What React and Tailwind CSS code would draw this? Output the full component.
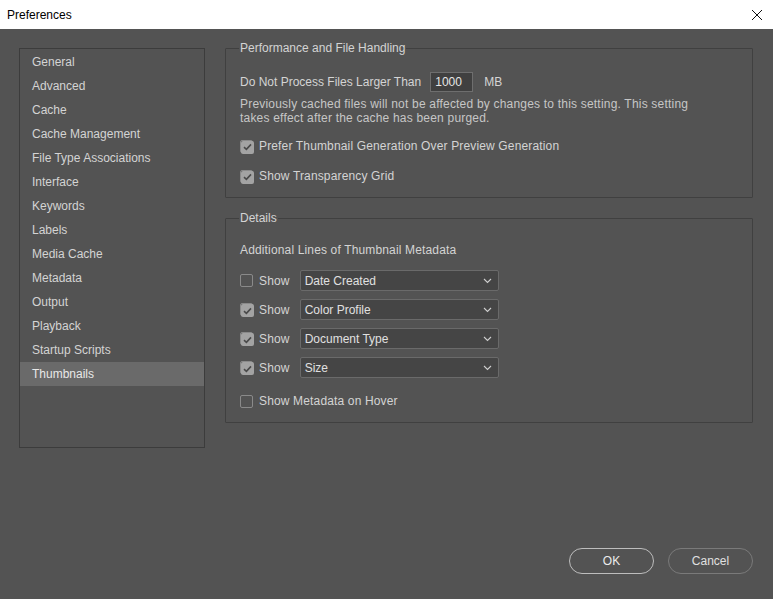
const navItems = [
  "General",
  "Advanced",
  "Cache",
  "Cache Management",
  "File Type Associations",
  "Interface",
  "Keywords",
  "Labels",
  "Media Cache",
  "Metadata",
  "Output",
  "Playback",
  "Startup Scripts",
  "Thumbnails",
];

const metaRows = [
  { checked: false, value: "Date Created" },
  { checked: true, value: "Color Profile" },
  { checked: true, value: "Document Type" },
  { checked: true, value: "Size" },
];

function Check({ checked }) {
  return (
    <span className="grid h-[13px] w-[13px] shrink-0 place-items-center rounded-[2px] border border-[#8a8a8a]">
      {checked ? (
        <span className="grid h-[13px] w-[13px] place-items-center rounded-[2px] bg-[#a3a3a3]">
          <svg width="9" height="8" viewBox="0 0 9 8" fill="none">
            <path d="M1 4.2 3.4 6.4 8 1.4" stroke="#4a4a4a" strokeWidth="1.6" />
          </svg>
        </span>
      ) : null}
    </span>
  );
}

function CheckRow({ checked, label, className = "" }) {
  return (
    <div className={`flex items-center gap-[6px] ${className}`}>
      <Check checked={checked} />
      <span className="tracking-[0.15px]">{label}</span>
    </div>
  );
}

function Group({ title, className = "", children }) {
  return (
    <fieldset className={`rounded-[1px] border border-[#404040] px-[14px] ${className}`}>
      <legend className="-ml-[1px] px-[1px] text-[12px] leading-[14px]">{title}</legend>
      {children}
    </fieldset>
  );
}

export default function App() {
  return (
    <div
      className="flex h-[599px] w-[773px] flex-col bg-[#535353] text-[12px] text-[#d4d4d4]"
      style={{ fontFamily: '"Liberation Sans", Arial, sans-serif' }}
    >
      <div className="flex h-[29px] items-center justify-between bg-white pl-[7px] pr-[10px] text-[12px] text-black">
        <span>Preferences</span>
        <svg width="12" height="12" viewBox="0 0 12 12" fill="none">
          <path d="M1 1 11 11M11 1 1 11" stroke="#111" strokeWidth="1" />
        </svg>
      </div>

      <div className="flex flex-1 gap-[20px] pl-[19px] pr-[20px] pt-[19px]">
        <nav className="h-[400px] w-[186px] shrink-0 border border-[#3c3c3c] pt-[1px]">
          {navItems.map((item) => (
            <div
              key={item}
              className={`flex h-[24px] items-center pl-[12px] ${item === "Thumbnails" ? "bg-[#6a6a6a] text-[#e8e8e8]" : ""}`}
            >
              {item}
            </div>
          ))}
        </nav>

        <div className="flex flex-1 flex-col">
          <div className="-mt-[7px] flex flex-col gap-[13px]">
            <Group title="Performance and File Handling" className="h-[157px] pt-[17px]">
              <div className="flex items-center">
                <span>Do Not Process Files Larger Than</span>
                <span className="ml-[9px] flex h-[20px] w-[43px] items-center border border-[#6e6e6e] bg-[#404040] pl-[4px] text-[#e6e6e6]">
                  1000
                </span>
                <span className="ml-[11px]">MB</span>
              </div>
              <p className="mt-[5px] leading-[14px] tracking-[0.2px] text-[#c6c6c6]">
                Previously cached files will not be affected by changes to this setting. This setting
                <br />
                takes effect after the cache has been purged.
              </p>
              <CheckRow checked label="Prefer Thumbnail Generation Over Preview Generation" className="mt-[12px]" />
              <CheckRow checked label="Show Transparency Grid" className="mt-[12px]" />
            </Group>

            <Group title="Details" className="h-[212px] pt-[16px]">
              <div className="tracking-[0.15px]">Additional Lines of Thumbnail Metadata</div>
              <div className="mt-[11px] flex flex-col gap-[8px]">
                {metaRows.map((row) => (
                  <div key={row.value} className="flex items-center">
                    <CheckRow checked={row.checked} label="Show" />
                    <div className="ml-[10px] flex h-[21px] w-[199px] items-center justify-between rounded-[2px] border border-[#6a6a6a] bg-[#454545] pl-[4px] pr-[6px] text-[#e0e0e0]">
                      <span>{row.value}</span>
                      <svg width="9" height="6" viewBox="0 0 9 6" fill="none">
                        <path d="M1 1 4.5 4.5 8 1" stroke="#cfcfcf" strokeWidth="1.1" />
                      </svg>
                    </div>
                  </div>
                ))}
              </div>
              <CheckRow checked={false} label="Show Metadata on Hover" className="mt-[14px]" />
            </Group>
          </div>

          <div className="mt-auto mb-[25px] flex justify-end gap-[14px]">
            <button
              type="button"
              className="h-[26px] w-[85px] rounded-full border border-[#bdbdbd] text-[12px] text-[#ececec]"
            >
              OK
            </button>
            <button
              type="button"
              className="h-[26px] w-[85px] rounded-full border border-[#7a7a7a] text-[12px] text-[#e0e0e0]"
            >
              Cancel
            </button>
          </div>
        </div>
      </div>
    </div>
  );
}
